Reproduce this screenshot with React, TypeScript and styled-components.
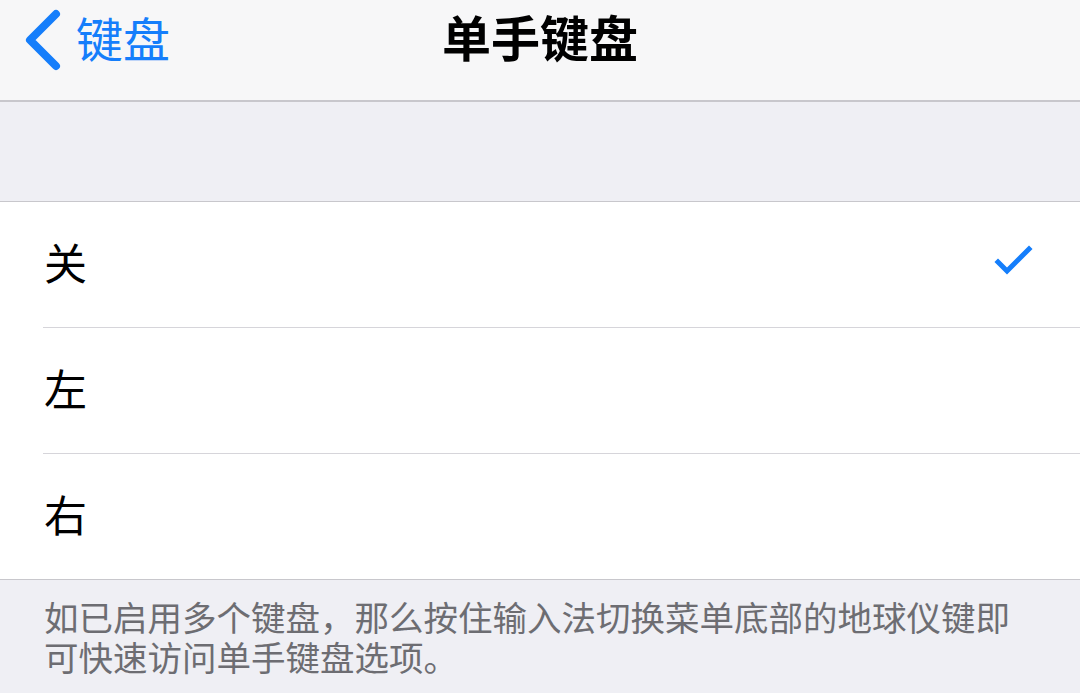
import React from 'react';
import styled, { createGlobalStyle } from 'styled-components';

const GlobalStyle = createGlobalStyle`
  html, body {
    margin: 0;
    padding: 0;
    background: #efeff4;
  }
  body {
    font-family: "Noto Sans CJK SC", "Noto Sans", sans-serif;
  }
`;

const Screen = styled.div`
  width: 1080px;
  height: 693px;
  overflow: hidden;
  background: #efeff4;
`;

const NavBar = styled.div`
  height: 100px;
  display: grid;
  grid-template-columns: 1fr auto 1fr;
  align-items: start;
  background: #f7f7f8;
  border-bottom: 2px solid #c8c7cc;
  box-sizing: content-box;
`;

const BackButton = styled.div`
  display: flex;
  align-items: center;
  gap: 14px;
  padding-left: 22px;
  margin-top: 7px;
  color: #157efb;
`;

const BackLabel = styled.span`
  font-size: 47px;
  line-height: 60px;
  margin-bottom: 6px;
`;

const Title = styled.div`
  font-size: 49px;
  font-weight: 700;
  color: #000;
  line-height: 60px;
  margin-top: 6px;
`;

const Spacer = styled.div`
  height: 99px;
  border-bottom: 1px solid #c8c7cc;
`;

const Group = styled.div`
  background: #fff;
  border-bottom: 1px solid #c8c7cc;
  padding-left: 43px;
`;

const Row = styled.div<{ $last?: boolean }>`
  height: 125px;
  display: flex;
  align-items: center;
  justify-content: space-between;
  padding-right: 46px;
  border-bottom: ${p => (p.$last ? 'none' : '1px solid #d6d5da')};
`;

const RowLabel = styled.span`
  font-size: 43px;
  color: #000;
  line-height: 56px;
  padding-left: 1px;
  margin-bottom: 8px;
`;

const CheckMark = styled.svg`
  margin-bottom: 8px;
`;

const Footer = styled.div`
  padding: 16px 60px 0 44px;
  font-size: 34.5px;
  line-height: 40px;
  color: #6d6d72;
`;

const Chevron = () => (
  <svg width="40" height="64" viewBox="0 0 40 64">
    <polyline
      points="34,6 8,32 34,58"
      fill="none"
      stroke="#157efb"
      strokeWidth="8"
      strokeLinecap="round"
      strokeLinejoin="round"
    />
  </svg>
);

const Check = () => (
  <CheckMark width="40" height="32" viewBox="0 0 40 32">
    <polyline
      points="4,17 13,26 35,4"
      fill="none"
      stroke="#157efb"
      strokeWidth="5"
      strokeLinecap="square"
    />
  </CheckMark>
);

const options = [
  { label: '关', checked: true },
  { label: '左', checked: false },
  { label: '右', checked: false },
];

const App: React.FC = () => (
  <>
    <GlobalStyle />
    <Screen>
      <NavBar>
        <BackButton>
          <Chevron />
          <BackLabel>键盘</BackLabel>
        </BackButton>
        <Title>单手键盘</Title>
        <div />
      </NavBar>
      <Spacer />
      <Group>
        {options.map((o, i) => (
          <Row key={o.label} $last={i === options.length - 1}>
            <RowLabel>{o.label}</RowLabel>
            {o.checked && <Check />}
          </Row>
        ))}
      </Group>
      <Footer>
        如已启用多个键盘，那么按住输入法切换菜单底部的地球仪键即可快速访问单手键盘选项。
      </Footer>
    </Screen>
  </>
);

export default App;
